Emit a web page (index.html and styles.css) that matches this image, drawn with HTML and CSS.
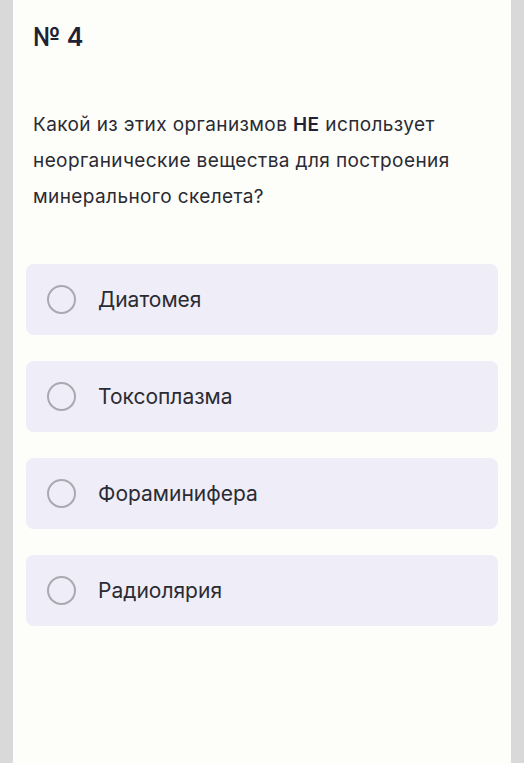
FILE: index.html
```html
<!DOCTYPE html>
<html>
<head>
    <title>Вопрос 4</title>
    <link rel="stylesheet" href="styles.css">
</head>
<body>
<div class="card">
    <h1 class="num">№ 4</h1>
    <p class="question">Какой из этих организмов <b>НЕ</b> использует неорганические вещества для построения минерального скелета?</p>

    <div class="options">
        <label class="option">
            <span class="radio"></span>
            <span class="option-text">Диатомея</span>
        </label>
        <label class="option">
            <span class="radio"></span>
            <span class="option-text">Токсоплазма</span>
        </label>
        <label class="option">
            <span class="radio"></span>
            <span class="option-text">Фораминифера</span>
        </label>
        <label class="option">
            <span class="radio"></span>
            <span class="option-text">Радиолярия</span>
        </label>
    </div>
</div>
</body>
</html>
```

FILE: styles.css
```css
html, body {
    margin: 0;
    height: 100%;
}
body {
    background-color: #d9d9d9;
    font-family: Inter, "Noto Sans", sans-serif;
}
.card {
    margin: 0 13px;
    min-height: 100%;
    background-color: #fdfdf9;
    padding: 22px 13px 0 13px;
    box-sizing: border-box;
}
.num {
    margin: 0 0 0 7px;
    font-size: 25px;
    font-weight: 600;
    color: #1f2235;
}
.question {
    margin: 55px 0 0 7px;
    font-size: 19px;
    line-height: 36px;
    letter-spacing: 0.4px;
    color: #2a2a33;
}
.question b {
    font-weight: 600;
    color: #1f2235;
}
.options {
    margin-top: 49px;
    display: flex;
    flex-direction: column;
    gap: 26px;
}
.option {
    display: flex;
    align-items: center;
    height: 71px;
    padding-left: 21px;
    background-color: #efedf7;
    border-radius: 8px;
    cursor: pointer;
}
.radio {
    width: 25px;
    height: 25px;
    border: 2px solid #a9a9b2;
    border-radius: 50%;
    flex-shrink: 0;
}
.option-text {
    margin-left: 22px;
    font-size: 21px;
    color: #2b2b33;
}
```
